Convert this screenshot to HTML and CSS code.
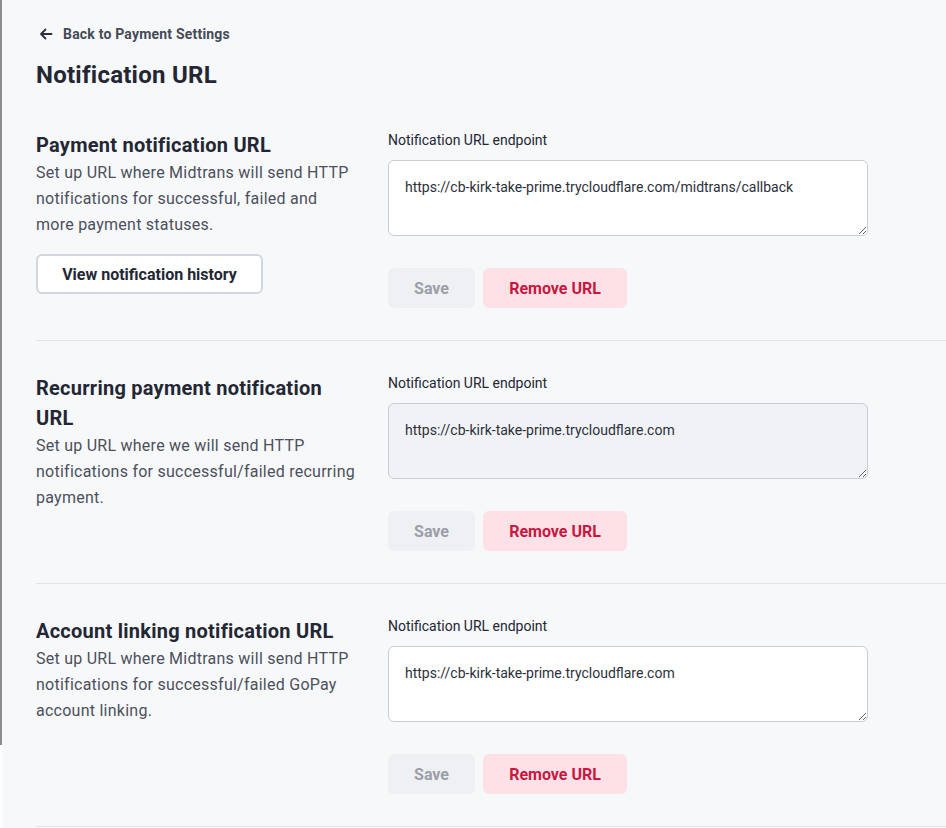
FILE: index.html
```html
<!DOCTYPE html>
<html lang="en">
<head>
<meta charset="utf-8">
<title>Notification URL</title>
<link rel="stylesheet" href="styles.css">
</head>
<body>
<div class="shell">
  <div class="rail"><div class="rail-line"></div></div>
  <main class="page">
    <a class="back" href="#">
      <svg class="back-icon" width="14" height="14" viewBox="0 0 14 14" aria-hidden="true">
        <path d="M12.5 7H2M6.5 2.5L2 7l4.5 4.5" fill="none" stroke="#2b2f3a" stroke-width="1.8" stroke-linecap="round" stroke-linejoin="round"/>
      </svg>
      <span>Back to Payment Settings</span>
    </a>
    <h1 class="title">Notification URL</h1>

    <section class="row">
      <div class="info">
        <h2 class="info-title">Payment notification URL</h2>
        <p class="info-desc">Set up URL where Midtrans will send HTTP notifications for successful, failed and more payment statuses.</p>
        <button class="btn-outline" type="button">View notification history</button>
      </div>
      <div class="form">
        <label class="label">Notification URL endpoint</label>
        <textarea class="field">https://cb-kirk-take-prime.trycloudflare.com/midtrans/callback</textarea>
        <div class="actions">
          <button class="btn btn-save" type="button">Save</button>
          <button class="btn btn-remove" type="button">Remove URL</button>
        </div>
      </div>
    </section>

    <section class="row">
      <div class="info">
        <h2 class="info-title">Recurring payment notification URL</h2>
        <p class="info-desc">Set up URL where we will send HTTP notifications for successful/failed recurring payment.</p>
      </div>
      <div class="form">
        <label class="label">Notification URL endpoint</label>
        <textarea class="field field-muted">https://cb-kirk-take-prime.trycloudflare.com</textarea>
        <div class="actions">
          <button class="btn btn-save" type="button">Save</button>
          <button class="btn btn-remove" type="button">Remove URL</button>
        </div>
      </div>
    </section>

    <section class="row">
      <div class="info">
        <h2 class="info-title">Account linking notification URL</h2>
        <p class="info-desc">Set up URL where Midtrans will send HTTP notifications for successful/failed GoPay account linking.</p>
      </div>
      <div class="form">
        <label class="label">Notification URL endpoint</label>
        <textarea class="field">https://cb-kirk-take-prime.trycloudflare.com</textarea>
        <div class="actions">
          <button class="btn btn-save" type="button">Save</button>
          <button class="btn btn-remove" type="button">Remove URL</button>
        </div>
      </div>
    </section>
  </main>
</div>
</body>
</html>
```

FILE: styles.css
```css
* { box-sizing: border-box; }

html, body {
  margin: 0;
  padding: 0;
  background: #f7f8fa;
  font-family: Roboto, "Liberation Sans", Arial, sans-serif;
  color: #232733;
}

.shell {
  display: flex;
  min-height: 828px;
}

.rail {
  width: 3px;
  flex: none;
  background: #fdfdfe;
}

.rail-line {
  width: 2px;
  height: 745px;
  background: #8d8d8f;
}

.page {
  flex: 1;
  padding: 24px 0 0 33px;
}

.back {
  display: flex;
  align-items: center;
  gap: 10px;
  height: 20px;
  padding-left: 3px;
  font-size: 14px;
  font-weight: 700;
  letter-spacing: 0.2px;
  color: #454a57;
  text-decoration: none;
}

.back-icon { display: block; }

.title {
  margin: 16px 0 8px;
  font-size: 24px;
  line-height: 30px;
  font-weight: 700;
  letter-spacing: 0.25px;
  color: #232733;
}

.row {
  display: flex;
  gap: 32px;
  padding: 32px 0;
  border-bottom: 1px solid #e0e4eb;
}

.info {
  width: 320px;
  flex: none;
}

.info-title {
  margin: 0;
  font-size: 20px;
  line-height: 30px;
  font-weight: 700;
  letter-spacing: 0.25px;
  color: #232733;
}

.info-desc {
  margin: 0;
  font-size: 16px;
  line-height: 26px;
  letter-spacing: 0.25px;
  color: #4c505c;
}

.btn-outline {
  margin-top: 16px;
  width: 227px;
  height: 40px;
  background: #ffffff;
  border: 2px solid #d3d6dd;
  border-radius: 6px;
  font-family: inherit;
  font-size: 16px;
  font-weight: 700;
  color: #232733;
}

.form {
  display: flex;
  flex-direction: column;
  width: 480px;
}

.label {
  display: block;
  font-size: 14px;
  line-height: 20px;
  color: #232733;
  margin-bottom: 10px;
}

.field {
  display: block;
  width: 480px;
  height: 76px;
  padding: 16px 16px 14px;
  border: 1px solid #c9cdd5;
  border-radius: 6px;
  background: #ffffff;
  font-family: inherit;
  font-size: 14px;
  line-height: 20px;
  color: #2c303a;
  resize: vertical;
}

.field-muted { background: #f1f2f5; }

.actions {
  display: flex;
  gap: 8px;
  margin-top: 32px;
}

.btn {
  height: 40px;
  border: none;
  border-radius: 6px;
  font-family: inherit;
  font-size: 16px;
  font-weight: 700;
}

.btn-save {
  width: 87px;
  background: #eff0f3;
  color: #9b9ea8;
}

.btn-remove {
  width: 144px;
  background: #fde1e7;
  color: #c8183f;
}
```
